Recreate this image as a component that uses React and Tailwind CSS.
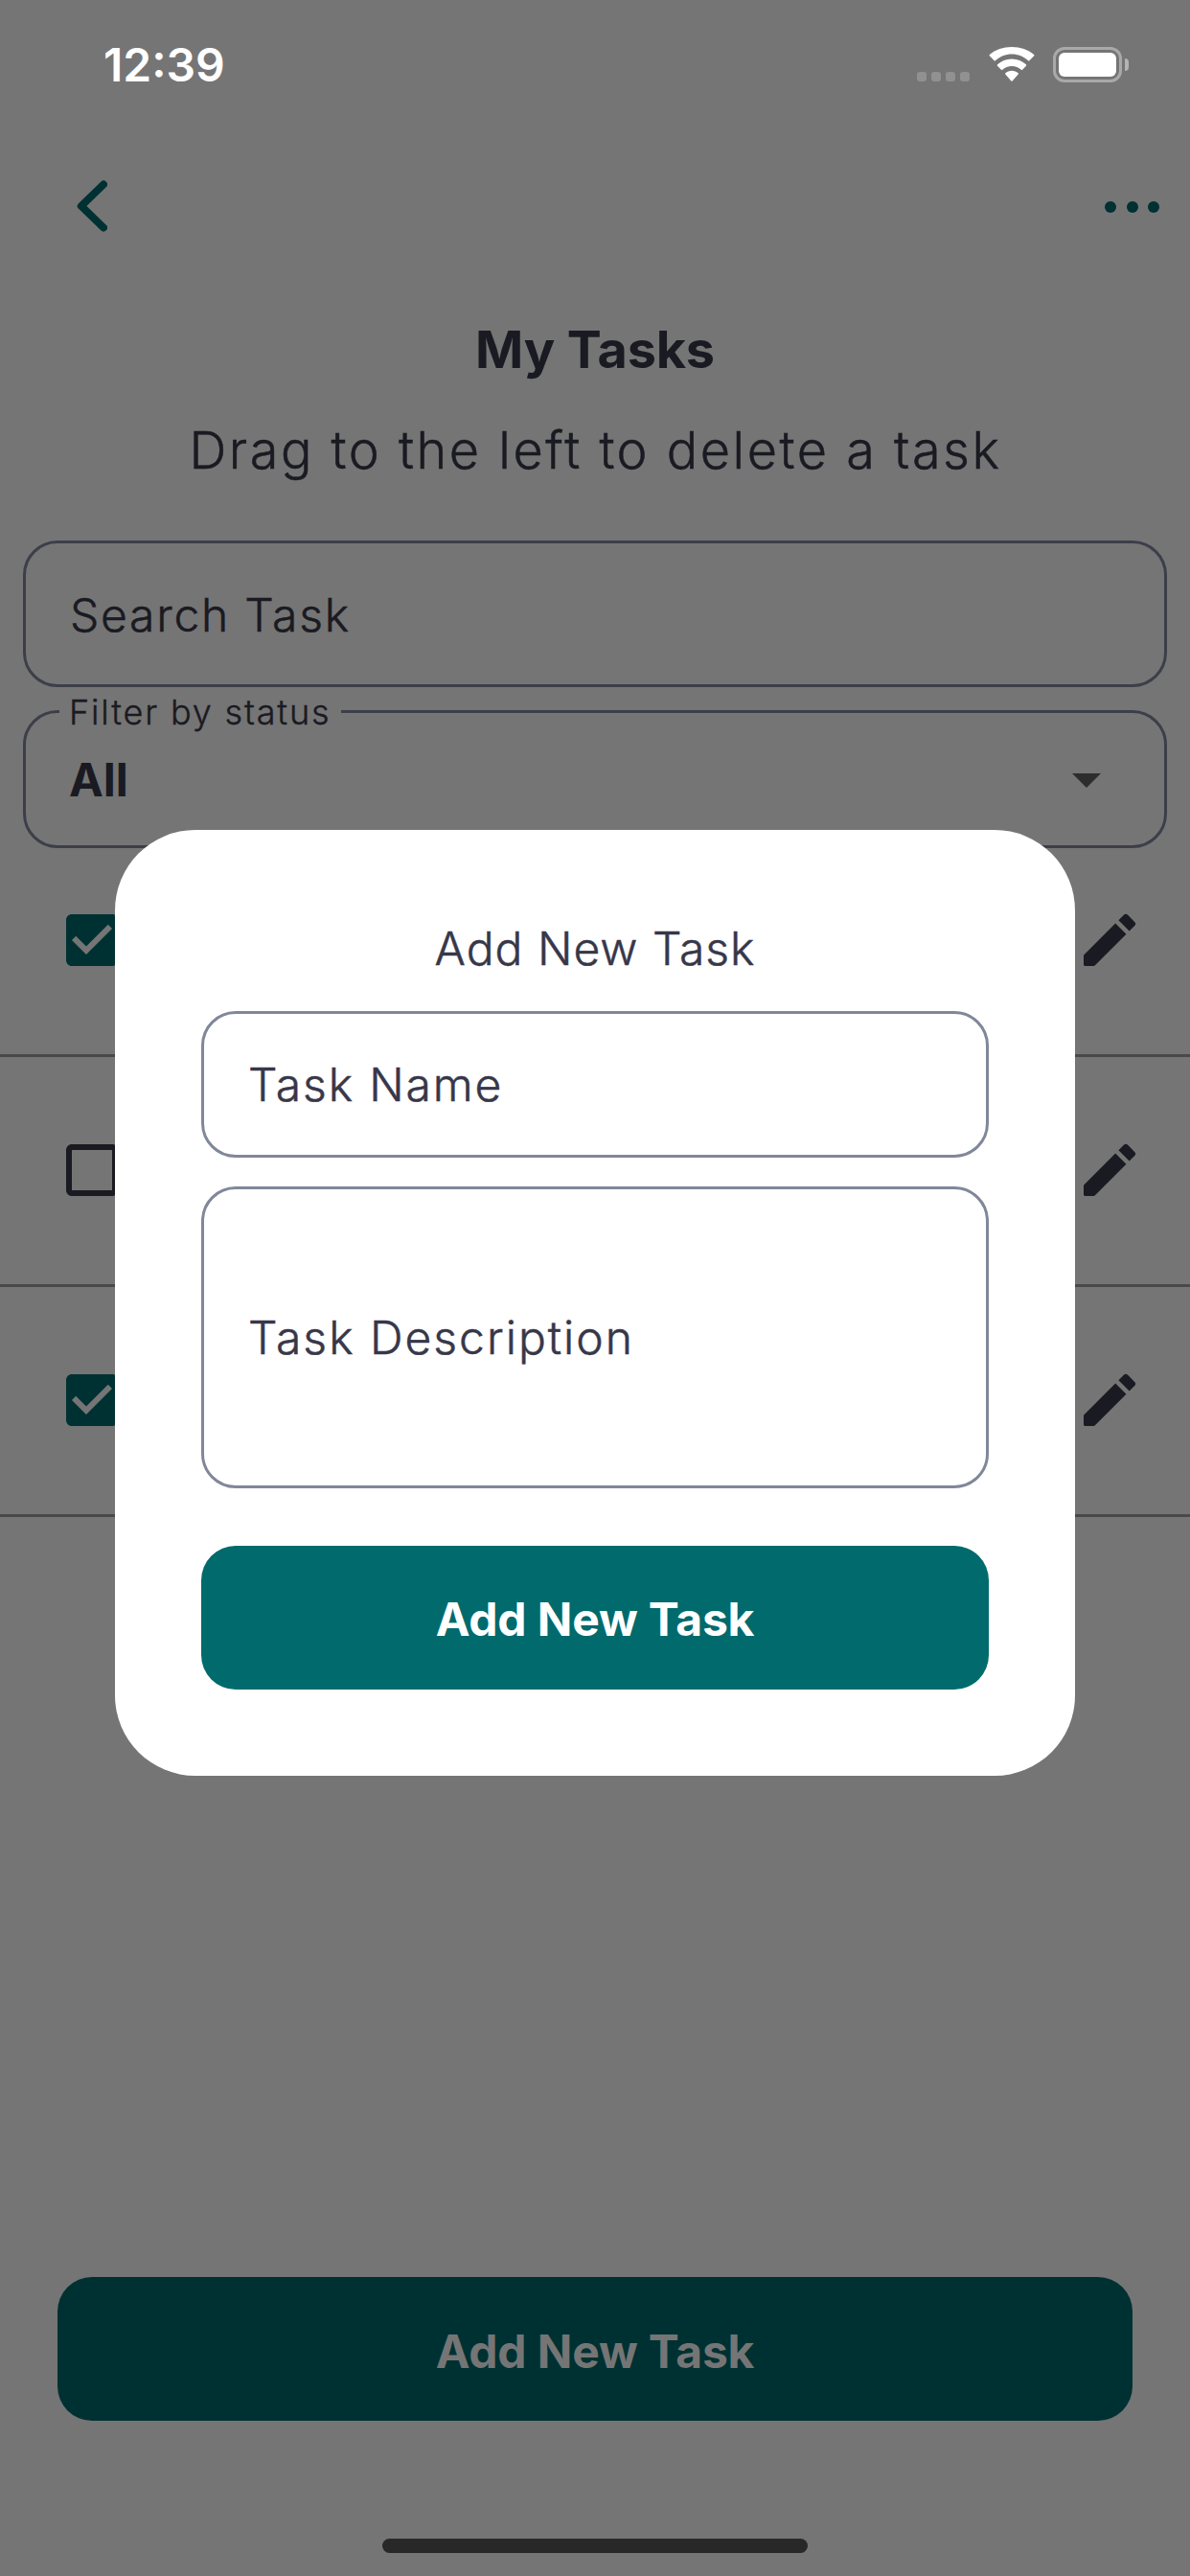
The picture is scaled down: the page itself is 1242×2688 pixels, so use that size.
import React from "react";

const CHECKED =
  "M19 3H5c-1.11 0-2 .9-2 2v14c0 1.1.89 2 2 2h14c1.11 0 2-.9 2-2V5c0-1.1-.89-2-2-2zm-9 14l-5-5 1.41-1.41L10 14.17l7.59-7.59L19 8l-9 9z";
const UNCHECKED =
  "M19 5v14H5V5h14m0-2H5c-1.1 0-2 .9-2 2v14c0 1.1.9 2 2 2h14c1.1 0 2-.9 2-2V5c0-1.1-.9-2-2-2z";
const PENCIL =
  "M3 17.46v3.04c0 .28.22.5.5.5h3.04c.13 0 .26-.05.35-.15L17.81 9.94l-3.75-3.75L3.15 17.1c-.1.1-.15.22-.15.36zM20.71 7.04a.996.996 0 0 0 0-1.41l-2.34-2.34a.996.996 0 0 0-1.41 0l-1.83 1.83 3.75 3.75 1.83-1.83z";

function Glyph({ d, className }) {
  return (
    <svg viewBox="0 0 24 24" className={`size-[72px] fill-current ${className}`}>
      <path d={d} />
    </svg>
  );
}

function StatusBar() {
  return (
    <div className="flex h-[135px] items-start justify-between pr-[64px] pl-[108px] text-white">
      <span className="mt-[38px] text-[48px] leading-[60px] font-semibold">12:39</span>
      <div className="mt-[49px] flex items-start">
        <div className="mt-[26px] flex gap-[5px]">
          {[0, 1, 2, 3].map((i) => (
            <span key={i} className="size-[10px] rounded-[3px] bg-[#919191]" />
          ))}
        </div>
        <svg viewBox="0 0 48 36" className="ml-[19.5px] h-[36px] w-[48px] fill-white">
          <path d="M24 7.6c6.6 0 12.6 2.5 17.1 6.7.35.33.9.32 1.23-.02l4.9-4.95c.4-.4.39-1.04-.02-1.42C41.1 2.9 32.9 0 24 0S6.9 2.9.79 7.91c-.41.38-.42 1.02-.02 1.42l4.9 4.95c.33.34.88.35 1.23.02C11.4 10.1 17.4 7.6 24 7.6z" />
          <path d="M24 19.9c3.8 0 7.2 1.4 9.8 3.8.37.34.93.33 1.28-.02l3.9-3.93c.4-.4.39-1.05-.03-1.44C35 14.7 29.8 12.4 24 12.4s-11 2.3-14.95 5.91c-.42.39-.43 1.04-.03 1.44l3.9 3.93c.35.35.91.36 1.28.02 2.6-2.4 6-3.8 9.8-3.8z" />
          <path d="M30.7 28.5c.4-.38.38-1-.05-1.35C28.8 25.6 26.5 24.7 24 24.7s-4.8.9-6.65 2.45c-.43.35-.45.97-.05 1.35l6.1 6.9c.36.4.84.4 1.2 0z" />
        </svg>
        <div className="ml-[19.5px] flex items-center">
          <div className="h-[37px] w-[72px] rounded-[12px] border-[3px] border-[#a9a9a9] p-[3px]">
            <div className="h-[25px] w-[60px] rounded-[6px] bg-white" />
          </div>
          <div className="ml-[3px] h-[13px] w-[4px] rounded-r-full bg-[#b4b4b4]" />
        </div>
      </div>
    </div>
  );
}

function TaskRow({ done }) {
  return (
    <div className="flex h-[240px] items-start justify-between border-b-[3px] border-[#494949] pt-[82px] pr-[48px] pl-[60px]">
      <Glyph d={done ? CHECKED : UNCHECKED} className={done ? "text-[#003132]" : "text-[#1a1a22]"} />
      <Glyph d={PENCIL} className="text-[#1a1a22]" />
    </div>
  );
}

function Modal() {
  return (
    <div className="absolute top-[865.5px] left-[120px] flex h-[987px] w-[1002px] flex-col rounded-[84px] bg-white px-[90px] pt-[94px] text-[48px] leading-[60px] font-light text-[#373749]">
      <h2 className="text-center tracking-[1px] [-webkit-text-stroke:0.5px]">Add New Task</h2>
      <div className="mt-[35px] flex h-[153px] items-center rounded-[36px] border-[3px] border-[#808799] pt-px pl-[46px] tracking-[1.85px] [-webkit-text-stroke:0.5px]">
        Task Name
      </div>
      <div className="mt-[30px] flex h-[315px] items-center rounded-[36px] border-[3px] border-[#808799] pt-px pl-[46px] tracking-[2px] [-webkit-text-stroke:0.5px]">
        Task Description
      </div>
      <button className="mt-[60px] h-[150px] rounded-[36px] bg-[#006a6c] pt-[4px] font-bold tracking-[-0.15px] text-white">
        Add New Task
      </button>
    </div>
  );
}

export default function App() {
  return (
    <div className="relative flex h-[2688px] w-[1242px] flex-col overflow-hidden bg-[#757575] font-['Inter',sans-serif] text-[#1a1a22]">
      <StatusBar />
      <div className="flex h-[160px] items-center justify-between pr-[32px] pl-[80px]">
        <svg viewBox="0 0 32 54" className="h-[54px] w-[32px] fill-none stroke-[#003132] stroke-[8]">
          <path d="M28 4.5 4.8 27 28 49.5" strokeLinecap="round" strokeLinejoin="round" />
        </svg>
        <div className="mt-[2px] flex gap-[10.4px]">
          {[0, 1, 2].map((i) => (
            <span key={i} className="size-[12px] rounded-full bg-[#003132]" />
          ))}
        </div>
      </div>
      <h1 className="mt-[35px] text-center text-[54px] leading-[70px] font-bold tracking-[-0.2px]">My Tasks</h1>
      <p className="mt-[35px] pl-px text-center text-[54px] leading-[70px] font-light tracking-[2.5px] [-webkit-text-stroke:0.5px]">
        Drag to the left to delete a task
      </p>
      <div className="mx-[24px] mt-[59px] flex h-[153px] shrink-0 items-center rounded-[36px] border-[3px] border-[#3c3f4a] pt-[2px] pl-[46px] text-[48px] font-light tracking-[1.75px] [-webkit-text-stroke:0.5px]">
        Search Task
      </div>
      <div className="relative mx-[24px] mt-[24px] flex h-[144px] shrink-0 items-center justify-between rounded-[36px] border-[3px] border-[#3c3f4a] pr-[66px] pl-[45px]">
        <span className="absolute top-[-24px] left-[35px] w-[294px] bg-[#757575] pl-[10px] text-[36px] leading-[46px] font-light tracking-[1.84px] [-webkit-text-stroke:0.4px]">
          Filter by status
        </span>
        <span className="pt-[2px] text-[48px] font-bold">All</span>
        <svg viewBox="0 0 30 15" className="mt-[3px] h-[15px] w-[30px] fill-[#2d2d2d]">
          <path d="M0 0h30L15 15z" />
        </svg>
      </div>
      <div className="mt-[-22px]">
        <TaskRow done />
        <TaskRow />
        <TaskRow done />
      </div>
      <button className="mx-[60px] mt-auto h-[150px] shrink-0 rounded-[36px] bg-[#003132] pt-[5px] text-[48px] font-bold tracking-[-0.15px] text-[#757575]">
        Add New Task
      </button>
      <div className="mx-auto mt-[123px] mb-[24px] h-[15px] w-[444px] shrink-0 rounded-full bg-[#282828]" />
      <Modal />
    </div>
  );
}
